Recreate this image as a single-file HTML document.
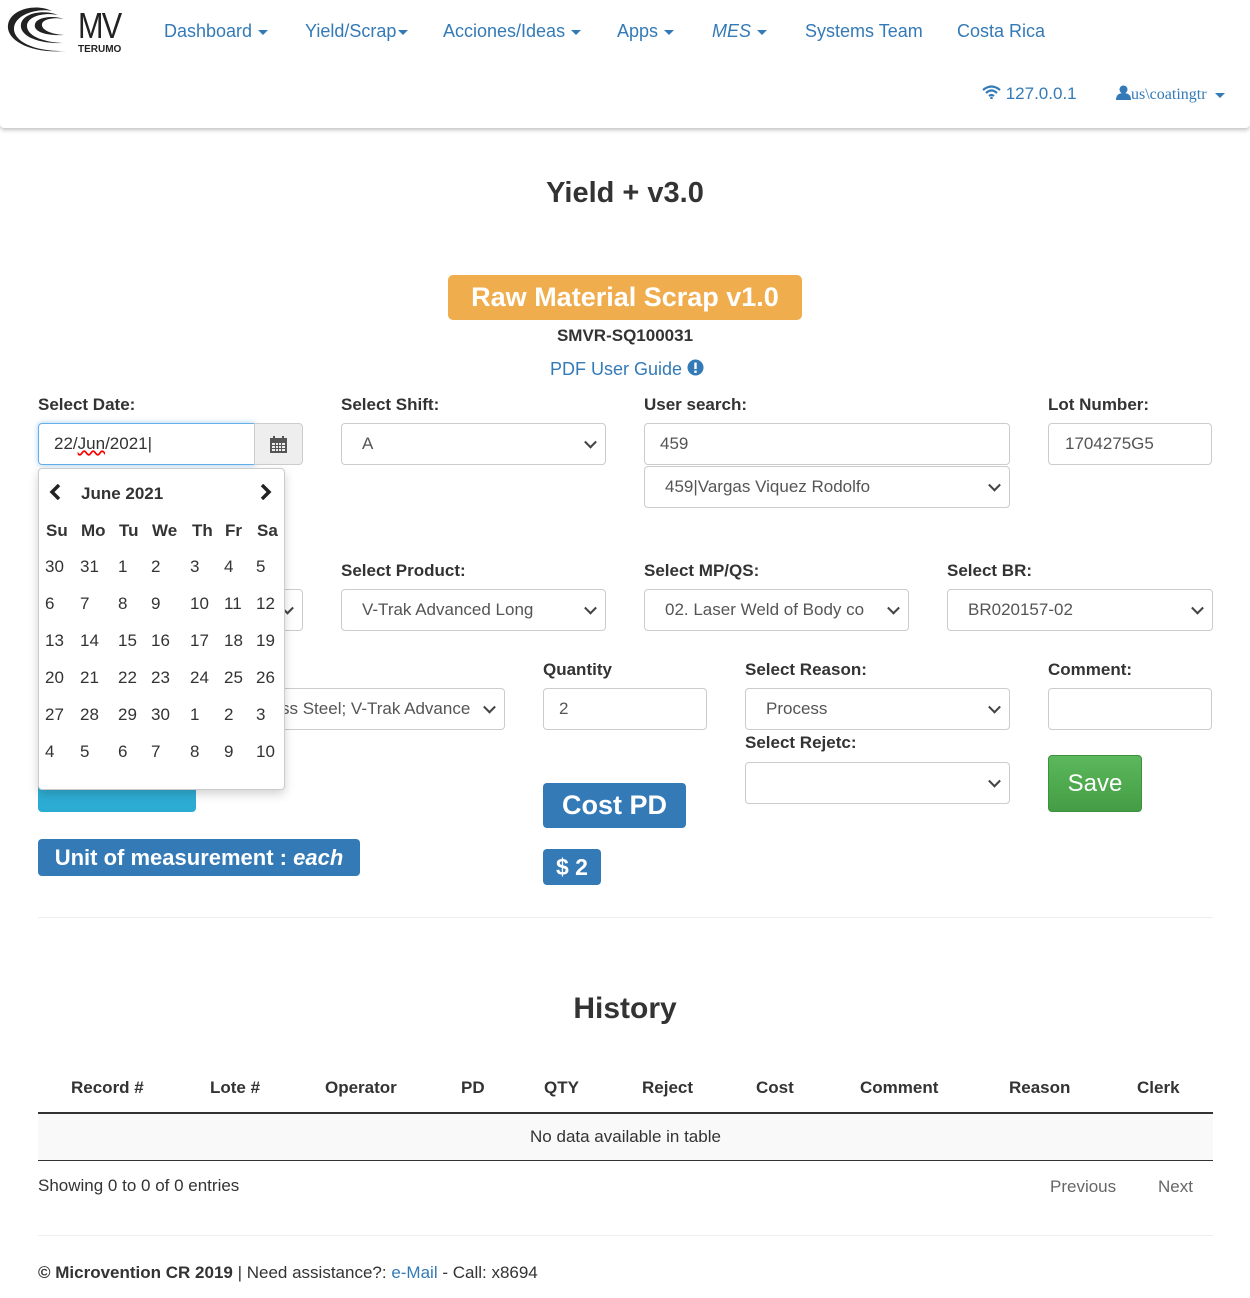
<!DOCTYPE html>
<html><head><meta charset="utf-8"><style>
*{box-sizing:border-box;margin:0;padding:0}
body{width:1250px;height:1298px;background:#fff;font-family:"Liberation Sans",Arial,sans-serif;color:#333;font-size:17px;position:relative;overflow:hidden}
.a{position:absolute;white-space:nowrap}
.nav{position:absolute;left:0;top:0;width:1250px;height:128px;background:#fff;box-shadow:0 2px 4px rgba(0,0,0,.25);border-radius:0 0 4px 4px}
.nl{color:#337ab7;font-size:18px}
.car{display:inline-block;border-left:5px solid transparent;border-right:5px solid transparent;border-top:5px solid #337ab7;vertical-align:middle;margin-left:6px}
.lbl{font-weight:bold;font-size:17px;color:#333}
.in{position:absolute;border:1px solid #ccc;border-radius:4px;background:#fff;font-size:17px;color:#555;padding-left:20px;display:flex;align-items:center}
.sel::after{content:"";position:absolute;right:10px;top:50%;width:7px;height:7px;border-right:2px solid #444;border-bottom:2px solid #444;transform:translateY(-70%) rotate(45deg)}
.cal{position:absolute;left:38px;top:468px;width:247px;height:322px;background:#fff;border:1px solid #ccc;border-radius:4px;box-shadow:0 4px 10px rgba(0,0,0,.18)}
.c{position:absolute;font-size:17px;color:#333}
.btn{position:absolute;color:#fff;font-weight:bold;border-radius:4px;background:#337ab7;display:flex;align-items:center;justify-content:center}
</style></head><body>
<div class="nav">
 <svg class="a" style="left:6px;top:6px" width="68" height="50" viewBox="0 0 68 50"><path d="M46 5C30-3 4 3 2 19 0 34 24 48 60 45 28 46 7 35 8 22 9 9 30 2 46 5Z" fill="#222"/><path d="M52 9C37 3 17 7 15 18 13 29 30 38 57 37 35 36 21 29 21 20 21 11 36 6 52 9Z" fill="#222"/><path d="M58 13C47 9 31 11 29 18 27 25 38 30 58 29 43 28 35 23 36 18 37 13 48 11 58 13Z" fill="#222"/></svg>
 <div class="a" style="left:78px;top:5px;font-size:36px;color:#222;letter-spacing:-2px;transform:scaleX(.85);transform-origin:left;font-weight:normal">MV</div>
 <div class="a" style="left:78px;top:44px;font-size:10px;font-weight:bold;color:#222">TERUMO</div>
 <div class="a nl" style="left:164px;top:21px">Dashboard<span class="car"></span></div>
 <div class="a nl" style="left:305px;top:21px">Yield/Scrap<span class="car" style="margin-left:2px"></span></div>
 <div class="a nl" style="left:443px;top:21px">Acciones/Ideas<span class="car"></span></div>
 <div class="a nl" style="left:617px;top:21px">Apps<span class="car"></span></div>
 <div class="a nl" style="left:712px;top:21px;font-style:italic">MES<span class="car"></span></div>
 <div class="a nl" style="left:805px;top:21px">Systems Team</div>
 <div class="a nl" style="left:957px;top:21px">Costa Rica</div>
 <div class="a nl" style="left:982px;top:84px;font-size:17px"><svg width="19" height="14" viewBox="0 0 19 14" style="vertical-align:0"><path d="M1 5Q9.5-2 18 5M4 8Q9.5 3 15 8M7 11Q9.5 9 12 11" stroke="#337ab7" stroke-width="2.2" fill="none"/><circle cx="9.5" cy="13" r="1.3" fill="#337ab7"/></svg> 127.0.0.1</div>
 <div class="a nl" style="left:1116px;top:85px;font-size:16px;font-family:'Liberation Serif',serif"><svg width="15" height="15" viewBox="0 0 15 15" style="vertical-align:-1px"><circle cx="7.5" cy="4.5" r="4" fill="#337ab7"/><path d="M0 15Q0 8 7.5 8 15 8 15 15Z" fill="#337ab7"/></svg>us\coatingtr<span class="car" style="margin-left:8px"></span></div>
</div>

<div class="a" style="left:0;width:1250px;text-align:center;top:177px;font-size:29px;font-weight:bold;color:#333">Yield + v3.0</div>
<div class="btn" style="left:448px;top:275px;width:354px;height:45px;background:#f0ad4e;font-size:27px;border-radius:5px">Raw Material Scrap v1.0</div>
<div class="a" style="left:0;width:1250px;text-align:center;top:326px;font-weight:bold;font-size:17px">SMVR-SQ100031</div>
<div class="a" style="left:550px;top:359px;color:#337ab7;font-size:18px">PDF User Guide <svg width="17" height="17" viewBox="0 0 17 17" style="vertical-align:-1px"><circle cx="8.5" cy="8.5" r="8" fill="#337ab7"/><rect x="7.3" y="3.5" width="2.4" height="6.5" fill="#fff"/><rect x="7.3" y="11.5" width="2.4" height="2.4" fill="#fff"/></svg></div>

<div class="a lbl" style="left:38px;top:395px">Select Date:</div>
<div class="a lbl" style="left:341px;top:395px">Select Shift:</div>
<div class="a lbl" style="left:644px;top:395px">User search:</div>
<div class="a lbl" style="left:1048px;top:395px">Lot Number:</div>
<div class="in" style="left:38px;top:423px;width:217px;height:42px;border-color:#66afe9;box-shadow:0 0 6px rgba(102,175,233,.6);padding-left:15px;border-radius:4px 0 0 4px;color:#333">22/<span style="text-decoration:underline wavy red">Jun</span>/2021|</div>
<div class="in" style="left:254px;top:423px;width:49px;height:42px;background:#eee;border-radius:0 4px 4px 0;padding:0;justify-content:center"><svg width="17" height="17" viewBox="0 0 17 17"><rect x="0" y="2" width="17" height="15" fill="#555"/><rect x="3" y="0" width="2" height="4" fill="#555"/><rect x="12" y="0" width="2" height="4" fill="#555"/><g fill="#eee"><rect x="2" y="7" width="3" height="2"/><rect x="6" y="7" width="2" height="2"/><rect x="9" y="7" width="2" height="2"/><rect x="12" y="7" width="3" height="2"/><rect x="2" y="10" width="3" height="2"/><rect x="6" y="10" width="2" height="2"/><rect x="9" y="10" width="2" height="2"/><rect x="12" y="10" width="3" height="2"/><rect x="2" y="13" width="3" height="2"/><rect x="6" y="13" width="2" height="2"/><rect x="9" y="13" width="2" height="2"/><rect x="12" y="13" width="3" height="2"/></g></svg></div>
<div class="in sel" style="left:341px;top:423px;width:265px;height:42px">A</div>
<div class="in" style="left:644px;top:423px;width:366px;height:42px;padding-left:15px">459</div>
<div class="in sel" style="left:644px;top:466px;width:366px;height:42px">459|Vargas Viquez Rodolfo</div>
<div class="in" style="left:1048px;top:423px;width:164px;height:42px;padding-left:16px">1704275G5</div>

<div class="a lbl" style="left:341px;top:561px">Select Product:</div>
<div class="a lbl" style="left:644px;top:561px">Select MP/QS:</div>
<div class="a lbl" style="left:947px;top:561px">Select BR:</div>
<div class="in sel" style="left:200px;top:589px;width:103px;height:42px"></div>
<div class="in sel" style="left:341px;top:589px;width:265px;height:42px">V-Trak Advanced Long</div>
<div class="in sel" style="left:644px;top:589px;width:265px;height:42px;overflow:hidden">02. Laser Weld of Body co</div>
<div class="in sel" style="left:947px;top:589px;width:266px;height:42px">BR020157-02</div>

<div class="a lbl" style="left:543px;top:660px">Quantity</div>
<div class="a lbl" style="left:745px;top:660px">Select Reason:</div>
<div class="a lbl" style="left:1048px;top:660px">Comment:</div>
<div class="in sel" style="left:200px;top:688px;width:305px;height:42px;padding-left:80px">ss Steel; V-Trak Advance</div>
<div class="in" style="left:543px;top:688px;width:164px;height:42px;padding-left:15px">2</div>
<div class="in sel" style="left:745px;top:688px;width:265px;height:42px">Process</div>
<div class="in" style="left:1048px;top:688px;width:164px;height:42px"></div>
<div class="a lbl" style="left:745px;top:733px">Select Rejetc:</div>
<div class="in sel" style="left:745px;top:762px;width:265px;height:42px"></div>
<div class="btn" style="left:1048px;top:755px;width:94px;height:57px;background:linear-gradient(#5cb85c,#449d44);font-weight:normal;font-size:24px;border:1px solid #3e8f3e">Save</div>
<div class="btn" style="left:38px;top:760px;width:158px;height:52px;background:linear-gradient(#39b3d7,#2aabd2)"></div>
<div class="btn" style="left:543px;top:783px;width:143px;height:45px;font-size:27px">Cost PD</div>
<div class="btn" style="left:543px;top:849px;width:58px;height:36px;font-size:23px">$ 2</div>
<div class="btn" style="left:38px;top:839px;width:322px;height:37px;font-size:22px">Unit of measurement :&nbsp;<i>each</i></div>

<div class="cal">
 <svg class="a" style="left:10px;top:15px" width="12" height="16" viewBox="0 0 12 16"><path d="M10 1L3 8l7 7" stroke="#222" stroke-width="3.5" fill="none"/></svg>
 <div class="c" style="left:42px;top:15px;font-weight:bold">June 2021</div>
 <svg class="a" style="left:221px;top:15px" width="12" height="16" viewBox="0 0 12 16"><path d="M2 1l7 7-7 7" stroke="#222" stroke-width="3.5" fill="none"/></svg>
 <div class="c" style="left:7px;top:52px;font-weight:bold">Su</div>
 <div class="c" style="left:42px;top:52px;font-weight:bold">Mo</div>
 <div class="c" style="left:80px;top:52px;font-weight:bold">Tu</div>
 <div class="c" style="left:113px;top:52px;font-weight:bold">We</div>
 <div class="c" style="left:153px;top:52px;font-weight:bold">Th</div>
 <div class="c" style="left:186px;top:52px;font-weight:bold">Fr</div>
 <div class="c" style="left:218px;top:52px;font-weight:bold">Sa</div>
</div>
<div id="days"></div>
<script>
var rows=[[30,31,1,2,3,4,5],[6,7,8,9,10,11,12],[13,14,15,16,17,18,19],[20,21,22,23,24,25,26],[27,28,29,30,1,2,3],[4,5,6,7,8,9,10]];
var xs=[45,80,118,151,190,224,256],h='';
rows.forEach(function(r,i){r.forEach(function(d,j){h+='<div class="a" style="left:'+xs[j]+'px;top:'+(557+i*37)+'px;font-size:17px">'+d+'</div>';});});
document.getElementById('days').innerHTML=h;
</script>

<div class="a" style="left:38px;top:917px;width:1175px;border-top:1px solid #eee"></div>
<div class="a" style="left:0;width:1250px;text-align:center;top:992px;font-size:30px;font-weight:bold">History</div>
<div class="a" style="left:38px;top:1070px;width:1175px;height:44px;border-bottom:2px solid #333;font-weight:bold;font-size:17px">
 <span class="a" style="left:33px;top:8px">Record #</span><span class="a" style="left:172px;top:8px">Lote #</span><span class="a" style="left:287px;top:8px">Operator</span><span class="a" style="left:423px;top:8px">PD</span><span class="a" style="left:506px;top:8px">QTY</span><span class="a" style="left:604px;top:8px">Reject</span><span class="a" style="left:718px;top:8px">Cost</span><span class="a" style="left:822px;top:8px">Comment</span><span class="a" style="left:971px;top:8px">Reason</span><span class="a" style="left:1099px;top:8px">Clerk</span>
</div>
<div class="a" style="left:38px;top:1114px;width:1175px;height:47px;background:#f9f9f9;border-bottom:1px solid #333;text-align:center;line-height:46px">No data available in table</div>
<div class="a" style="left:38px;top:1176px">Showing 0 to 0 of 0 entries</div>
<div class="a" style="left:1050px;top:1177px;color:#666">Previous</div>
<div class="a" style="left:1158px;top:1177px;color:#666">Next</div>
<div class="a" style="left:38px;top:1235px;width:1175px;border-top:1px solid #eee"></div>
<div class="a" style="left:38px;top:1263px"><b>© Microvention CR 2019</b> | Need assistance?: <span style="color:#337ab7">e-Mail</span> - Call: x8694</div>
</body></html>
